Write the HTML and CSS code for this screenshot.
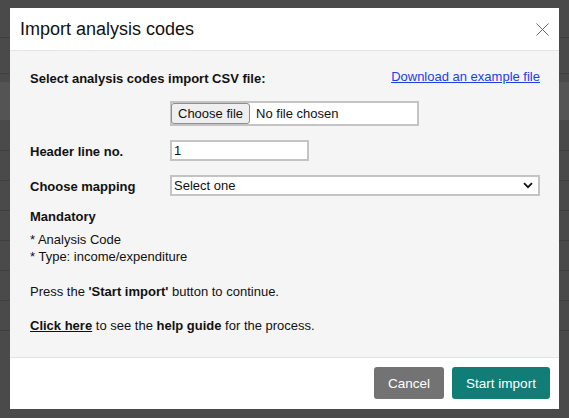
FILE: index.html
```html
<!DOCTYPE html>
<html>
<head>
<meta charset="utf-8">
<link rel="stylesheet" href="styles.css">
</head>
<body>
<div class="modal">
  <div class="modal-header">
    <h1 class="title">Import analysis codes</h1>
    <span class="close"><svg width="13" height="13" viewBox="0 0 13 13"><path d="M0.5 0.5L12.5 12.5M12.5 0.5L0.5 12.5" stroke="#6b6b6b" stroke-width="1" fill="none"/></svg></span>
  </div>
  <div class="modal-body">
    <div class="row-top">
      <span class="strong">Select analysis codes import CSV file:</span>
      <a class="link" href="#">Download an example file</a>
    </div>
    <div class="file-row">
      <div class="file-box"><span class="file-btn">Choose file</span><span class="file-text">No file chosen</span></div>
    </div>
    <div class="field">
      <span class="label">Header line no.</span>
      <div class="text-input">1</div>
    </div>
    <div class="field">
      <span class="label">Choose mapping</span>
      <div class="select">Select one<svg class="chev" width="10" height="7" viewBox="0 0 10 7"><path d="M1 1.2L5 5.2L9 1.2" stroke="#111" stroke-width="1.8" fill="none"/></svg></div>
    </div>
    <div class="mand">Mandatory</div>
    <ul class="list">
      <li>* Analysis Code</li>
      <li>* Type: income/expenditure</li>
    </ul>
    <p class="para">Press the <b>'Start import'</b> button to continue.</p>
    <p class="para help"><a class="help-link" href="#">Click here</a> to see the <b>help guide</b> for the process.</p>
  </div>
  <div class="modal-footer">
    <button class="btn btn-cancel">Cancel</button>
    <button class="btn btn-start">Start import</button>
  </div>
</div>
</body>
</html>
```
FILE: styles.css
```css
html, body {
  margin: 0;
  padding: 0;
}
body {
  width: 569px;
  height: 418px;
  overflow: hidden;
  background-color: #4a4a4a;
  background-image:
    linear-gradient(#3f3f3f, #3f3f3f),
    linear-gradient(#404040, #404040),
    linear-gradient(#545454, #545454),
    repeating-linear-gradient(to bottom, #3f3f3f 0, #3f3f3f 1px, transparent 1px, transparent 30px);
  background-size: 100% 1px, 100% 1px, 100% 38px, 100% 210px;
  background-position: 0 37px, 0 73px, 0 82px, 0 150px;
  background-repeat: no-repeat;
  padding: 8px 10px 0 10px;
  box-sizing: border-box;
  font-family: "Liberation Sans", Arial, Helvetica, sans-serif;
  color: #111;
}
.modal {
  width: 549px;
  height: 401px;
  background: #fff;
  display: flex;
  flex-direction: column;
}
.modal-header {
  height: 42px;
  border-bottom: 1px solid #e3e3e3;
  display: flex;
  align-items: center;
  justify-content: space-between;
  padding: 0 10px 0 10px;
}
.title {
  margin: 0;
  font-weight: normal;
  font-size: 18px;
  color: #111;
}
.close {
  display: flex;
  padding-top: 1px;
}
.modal-body {
  background: #f5f5f5;
  flex: 1;
  padding: 20px 19px 0 20px;
  font-size: 13px;
  line-height: 16px;
  border-bottom: 1px solid #e1e1e1;
}
.row-top {
  display: flex;
  justify-content: space-between;
  align-items: center;
}
.strong, .label, .mand {
  font-weight: bold;
}
.link {
  color: #1c3fe8;
  text-decoration: underline;
  margin-top: -5px;
}
.file-row {
  margin-top: 14px;
  padding-left: 140px;
}
.file-box {
  width: 245px;
  height: 21px;
  border: 2px solid #c4c4c4;
  background: #fff;
  display: flex;
  align-items: center;
}
.file-btn {
  line-height: 19px;
  box-sizing: border-box;
  height: 21px;
  border: 1px solid #8e8e8e;
  border-radius: 3px;
  background: #efefef;
  padding: 0 6px;
  margin-left: -1px;
  font-size: 13px;
}
.file-text {
  margin-left: 6px;
}
.field {
  display: flex;
  align-items: center;
  margin-top: 14px;
}
.label {
  width: 140px;
  flex: none;
  padding-top: 3px;
}
.text-input {
  width: 131px;
  height: 17px;
  line-height: 17px;
  border: 2px solid #c4c4c4;
  background: #fff;
  padding: 0 2px;
}
.select {
  flex: 1;
  height: 17px;
  line-height: 17px;
  border: 2px solid #c4c4c4;
  background: #fff;
  padding: 0 2px;
  display: flex;
  justify-content: space-between;
  align-items: center;
}
.chev {
  margin-right: 3px;
}
.mand {
  margin-top: 13px;
}
.list {
  list-style: none;
  margin: 6px 0 0 0;
  padding: 0;
  line-height: 17px;
}
.para {
  margin: 19px 0 0 0;
}
.help {
  margin-top: 18px;
}
.help-link {
  color: #111;
  font-weight: bold;
  text-decoration: underline;
}
.modal-footer {
  height: 51px;
  display: flex;
  justify-content: flex-end;
  align-items: flex-start;
  padding: 9px 9px 0 0;
  box-sizing: border-box;
  gap: 8px;
}
.btn {
  height: 32px;
  border: none;
  border-radius: 3px;
  color: #fff;
  font-family: "Liberation Sans", Arial, Helvetica, sans-serif;
  font-size: 13.5px;
  padding: 0;
}
.btn-cancel {
  width: 70px;
  background: #737373;
}
.btn-start {
  width: 98px;
  background: #127c77;
}
```
